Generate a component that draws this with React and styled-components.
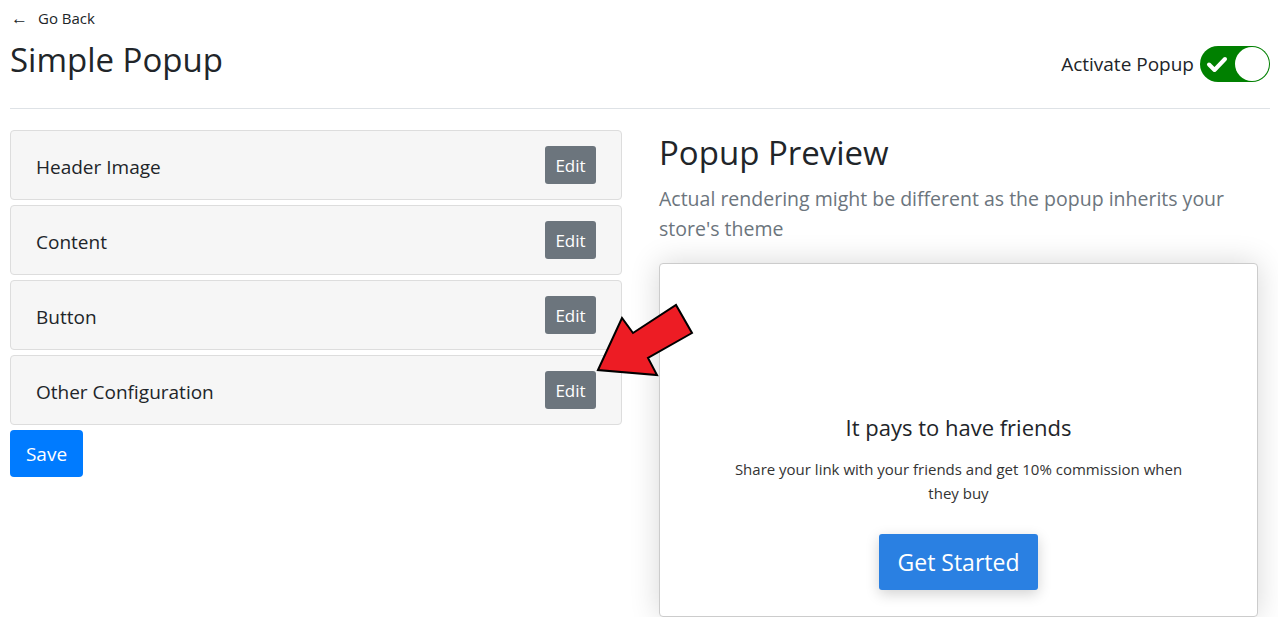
import React, { useState } from "react";
import styled, { createGlobalStyle } from "styled-components";

const GlobalStyle = createGlobalStyle`
  body {
    margin: 0;
    background: #ffffff;
    font-family: "Open Sans", "Noto Sans", sans-serif;
    color: #212529;
  }
`;

const cards = ["Header Image", "Content", "Button", "Other Configuration"];

function App() {
  const [active, setActive] = useState(true);

  return (
    <Page>
      <GlobalStyle />
      <BackLink href="#">
        <span>←</span> Go Back
      </BackLink>
      <HeaderRow>
        <Title>Simple Popup</Title>
        <ToggleWrap>
          Activate Popup
          <Toggle $on={active} onClick={() => setActive(!active)}>
            <svg width="22" height="18" viewBox="0 0 22 18">
              <path
                d="M3 9.5 L8.5 15 L19 4"
                fill="none"
                stroke="#fff"
                strokeWidth="4"
                strokeLinecap="round"
                strokeLinejoin="round"
              />
            </svg>
            <Knob />
          </Toggle>
        </ToggleWrap>
      </HeaderRow>

      <Body>
        <LeftCol>
          {cards.map((c) => (
            <Card key={c}>
              <CardLabel>{c}</CardLabel>
              <EditBtn>Edit</EditBtn>
            </Card>
          ))}
          <SaveBtn>Save</SaveBtn>
        </LeftCol>

        <RightCol>
          <PreviewTitle>Popup Preview</PreviewTitle>
          <Muted>
            Actual rendering might be different as the popup inherits your
            store's theme
          </Muted>
          <PreviewCard>
            <PopHead>It pays to have friends</PopHead>
            <PopText>
              Share your link with your friends and get 10% commission when
              they buy
            </PopText>
            <StartBtn>Get Started</StartBtn>
          </PreviewCard>
        </RightCol>

        <Arrow width="102" height="78" viewBox="0 0 102 78">
          <polygon
            points="4,68 28,16 39,31 82,3 98,31 54,56 63,73"
            fill="#ed1c24"
            stroke="#000"
            strokeWidth="2"
            strokeLinejoin="miter"
          />
        </Arrow>
      </Body>
    </Page>
  );
}

const Page = styled.div`
  padding: 6px 8px 0 10px;
`;

const BackLink = styled.a`
  display: flex;
  align-items: center;
  gap: 10px;
  font-size: 15px;
  line-height: 24px;
  color: #212529;
  text-decoration: none;
  span {
    font-size: 17px;
    margin-left: 1px;
  }
`;

const HeaderRow = styled.div`
  display: flex;
  justify-content: space-between;
  align-items: center;
  padding: 7px 0 25px;
  border-bottom: 1px solid #dee2e6;
`;

const Title = styled.h1`
  margin: 0;
  font-size: 33px;
  font-weight: 400;
  line-height: 46px;
`;

const ToggleWrap = styled.label`
  display: flex;
  align-items: center;
  gap: 6px;
  font-size: 19px;
  margin-top: 8px;
`;

const Toggle = styled.div`
  position: relative;
  width: 70px;
  height: 36px;
  border-radius: 18px;
  background: ${(p) => (p.$on ? "#008000" : "#ccc")};
  display: flex;
  align-items: center;
  padding-left: 6px;
  box-sizing: border-box;
  cursor: pointer;
`;

const Knob = styled.span`
  position: absolute;
  right: 1px;
  top: 1px;
  width: 34px;
  height: 34px;
  border-radius: 50%;
  background: #fff;
`;

const Body = styled.div`
  position: relative;
  display: grid;
  grid-template-columns: 612px 599px;
  column-gap: 37px;
  margin-top: 20px;
`;

const LeftCol = styled.div`
  display: flex;
  flex-direction: column;
  gap: 5px;
  padding-top: 1px;
  align-items: flex-start;
`;

const Card = styled.div`
  align-self: stretch;
  box-sizing: border-box;
  height: 70px;
  display: flex;
  align-items: center;
  justify-content: space-between;
  padding: 0 25px;
  background: #f6f6f6;
  border: 1px solid #dddddd;
  border-radius: 4px;
`;

const CardLabel = styled.span`
  font-size: 19px;
  padding-top: 3px;
`;

const EditBtn = styled.button`
  height: 38px;
  width: 51px;
  border: 0;
  border-radius: 3px;
  background: #6c757d;
  color: #fff;
  font-family: inherit;
  font-size: 17px;
  padding: 0;
`;

const SaveBtn = styled.button`
  width: 73px;
  height: 47px;
  border: 0;
  border-radius: 4px;
  background: #007bff;
  color: #fff;
  font-family: inherit;
  font-size: 19px;
  padding: 0;
`;

const RightCol = styled.div`
  display: flex;
  flex-direction: column;
`;

const PreviewTitle = styled.h2`
  margin: 2px 0 0;
  font-size: 33px;
  font-weight: 400;
  line-height: 44px;
`;

const Muted = styled.p`
  margin: 9px 0 0;
  color: #6c757d;
  font-size: 19.5px;
  line-height: 30px;
`;

const PreviewCard = styled.div`
  margin-top: 19px;
  height: 354px;
  box-sizing: border-box;
  border: 1px solid #cccccc;
  border-radius: 4px;
  background: #fff;
  box-shadow: 0 0 30px rgba(0, 0, 0, 0.16);
  display: flex;
  flex-direction: column;
  align-items: center;
  justify-content: flex-end;
  padding-bottom: 26px;
  text-align: center;
`;

const PopHead = styled.h3`
  margin: 0;
  font-size: 22px;
  font-weight: 400;
  line-height: 30px;
`;

const PopText = styled.p`
  margin: 15px 0 0;
  width: 470px;
  font-size: 15px;
  line-height: 24px;
  color: #333;
`;

const StartBtn = styled.button`
  margin-top: 29px;
  width: 159px;
  height: 56px;
  border: 0;
  border-radius: 3px;
  background: #2a80e2;
  color: #fff;
  font-family: inherit;
  font-size: 23px;
  box-shadow: 0 4px 14px rgba(0, 0, 0, 0.18);
`;

const Arrow = styled.svg`
  position: absolute;
  left: 584px;
  top: 173px;
`;

export default App;
